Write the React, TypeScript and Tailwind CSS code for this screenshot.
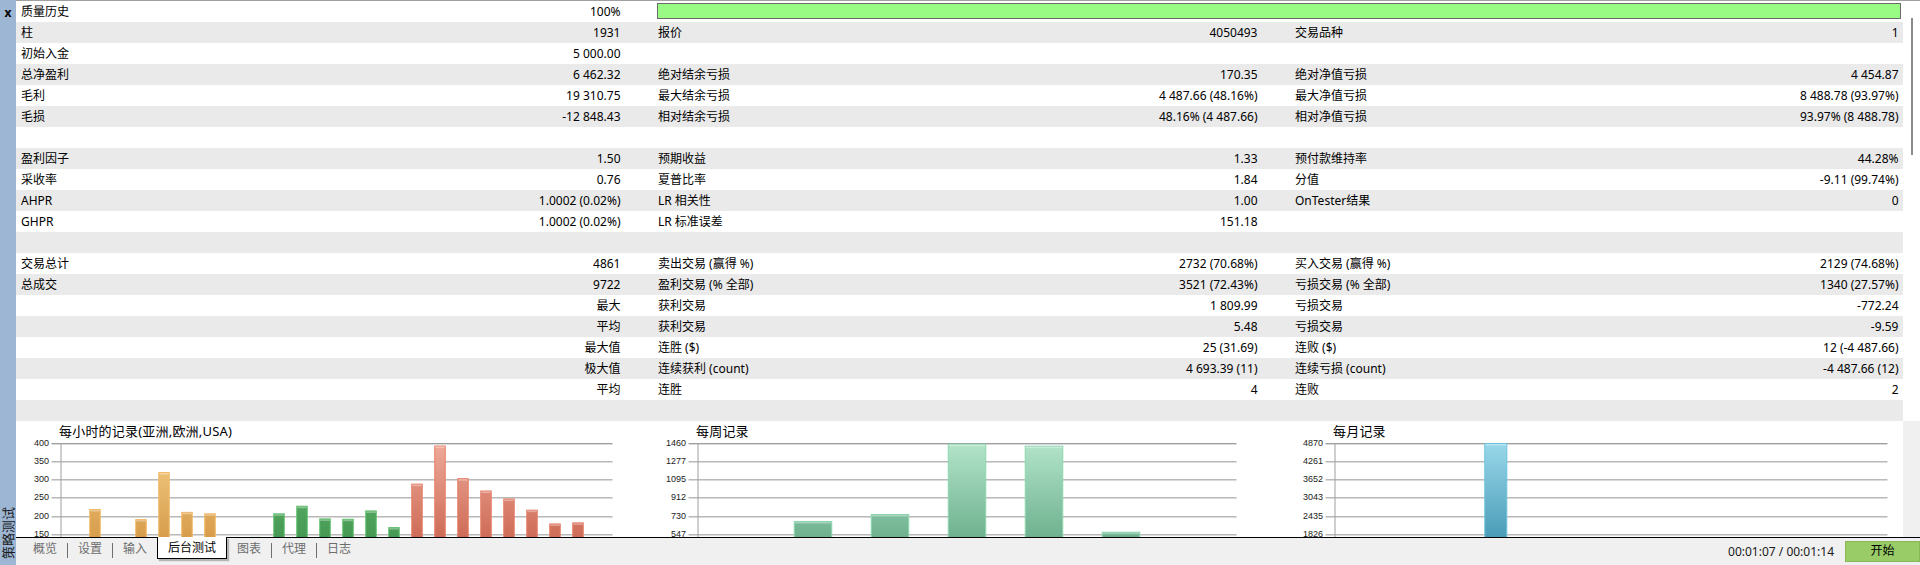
import React from 'react'

type Row = [string, string, string, string, string, string]

const ROWS: Row[] = [
  ['柱', '1931', '报价', '4050493', '交易品种', '1'],
  ['初始入金', '5 000.00', '', '', '', ''],
  ['总净盈利', '6 462.32', '绝对结余亏损', '170.35', '绝对净值亏损', '4 454.87'],
  ['毛利', '19 310.75', '最大结余亏损', '4 487.66 (48.16%)', '最大净值亏损', '8 488.78 (93.97%)'],
  ['毛损', '-12 848.43', '相对结余亏损', '48.16% (4 487.66)', '相对净值亏损', '93.97% (8 488.78)'],
  ['', '', '', '', '', ''],
  ['盈利因子', '1.50', '预期收益', '1.33', '预付款维持率', '44.28%'],
  ['采收率', '0.76', '夏普比率', '1.84', '分值', '-9.11 (99.74%)'],
  ['AHPR', '1.0002 (0.02%)', 'LR 相关性', '1.00', 'OnTester结果', '0'],
  ['GHPR', '1.0002 (0.02%)', 'LR 标准误差', '151.18', '', ''],
  ['', '', '', '', '', ''],
  ['交易总计', '4861', '卖出交易 (赢得 %)', '2732 (70.68%)', '买入交易 (赢得 %)', '2129 (74.68%)'],
  ['总成交', '9722', '盈利交易 (% 全部)', '3521 (72.43%)', '亏损交易 (% 全部)', '1340 (27.57%)'],
  ['', '最大', '获利交易', '1 809.99', '亏损交易', '-772.24'],
  ['', '平均', '获利交易', '5.48', '亏损交易', '-9.59'],
  ['', '最大值', '连胜 ($)', '25 (31.69)', '连败 ($)', '12 (-4 487.66)'],
  ['', '极大值', '连续获利 (count)', '4 693.39 (11)', '连续亏损 (count)', '-4 487.66 (12)'],
  ['', '平均', '连胜', '4', '连败', '2'],
  ['', '', '', '', '', ''],
]

// bar colours: [gradient top, gradient bottom, outline]
const COLORS: Record<string, [string, string, string]> = {
  asia: ['#f5d08a', '#c7812a', '#f3b866'],
  eu: ['#6cbf77', '#2f8440', '#62c06f'],
  us: ['#eeaa9a', '#bd4a33', '#e8806a'],
  week: ['#b3e4ca', '#4a9670', '#8ad7ae'],
  month: ['#9ad8ea', '#1f7c9c', '#6cc3dd'],
}

const HOURLY = [100, 218, 110, 190, 320, 210, 206, 95, 141, 206, 227, 192, 191, 214, 168, 288, 393, 303, 269, 247, 216, 178, 181, 120]

type ChartProps = {
  title: string
  plotW: number
  slots: number
  max: number
  ticks: string[]
  bars: { i: number; v: number; c: string }[]
  id: string
}

function Chart({ title, plotW, slots, max, ticks, bars, id }: ChartProps) {
  const H = 145
  const ax = 44.5
  const slot = plotW / slots
  const used = Array.from(new Set(bars.map((b) => b.c)))
  return (
    <div className="flex flex-col">
      <div className="h-[22px] pl-[43px] flex items-center text-[13px] tracking-[0.2px]">{title}</div>
      <svg width={ax + plotW + 6} height={166} className="block -mt-[6px]">
        <defs>
          {used.map((c) => (
            <linearGradient key={c} id={`${id}-${c}`} gradientUnits="userSpaceOnUse" x1="0" y1="0" x2="0" y2={H}>
              <stop offset="0" stopColor={COLORS[c][0]} />
              <stop offset="1" stopColor={COLORS[c][1]} />
            </linearGradient>
          ))}
        </defs>
        <g transform="translate(0,6)">
          {ticks.map((t, k) => {
            const y = Math.round((H / 8) * k)
            return (
              <g key={t}>
                <rect x={ax - 9} y={y} width={plotW + 9} height={1} fill={k === 0 ? '#9e9e9e' : '#b9b9b9'} />
                <rect x={ax - 9} y={y + 1} width={plotW + 9} height={1} fill="#dadada" />
                {/* labels further down sit below the tab bar and are never seen */}
                {k < 6 && (
                  <text
                    x={ax - 11.5}
                    y={y + 1}
                    textAnchor="end"
                    dominantBaseline="middle"
                    fontSize="9"
                    fontFamily="'Liberation Sans', sans-serif"
                    fill="#222"
                  >
                    {t}
                  </text>
                )}
              </g>
            )
          })}
          <rect x={ax} y={0} width={1} height={H + 10} fill="#a0a0a0" />
          {bars.map((b) => {
            const x = ax + b.i * slot + slot / 4
            const y = H * (1 - b.v / max)
            return (
              <g key={b.i}>
                <rect
                  x={x + 0.5}
                  y={y + 0.5}
                  width={slot / 2 - 1}
                  height={H + 20 - y}
                  fill={`url(#${id}-${b.c})`}
                  stroke={COLORS[b.c][2]}
                  strokeWidth={1}
                />
                <rect x={x + 1} y={y + 1} width={slot / 2 - 2} height={1.5} fill="#ffffff" opacity={0.35} />
              </g>
            )
          })}
        </g>
      </svg>
    </div>
  )
}

function Cell({ label, value, w, pr }: { label: string; value: string; w: string; pr: string }) {
  return (
    <div className={`${w} ${pr} pl-[5px] flex items-center justify-between whitespace-nowrap`}>
      <span>{label}</span>
      <span>{value}</span>
    </div>
  )
}

const TABS = ['概览', '设置', '输入', '后台测试', '图表', '代理', '日志']

export default function App() {
  return (
    <div className="w-[1920px] h-[565px] flex overflow-hidden bg-white text-[12px] text-black font-['Noto_Sans','Noto_Sans_CJK_SC',sans-serif]">
      {/* left dock strip */}
      <div className="w-[16px] bg-[#9db6d4] flex flex-col items-center justify-between">
        <div className="h-[25px] flex items-center justify-center text-[12px] font-bold leading-none">x</div>
        <div className="mb-[6px] [writing-mode:vertical-rl] [text-orientation:sideways] rotate-180 text-[13px] leading-[16px] text-[#1a1a1a]">
          策略测试
        </div>
      </div>

      <div className="flex-1 flex flex-col min-w-0">
        <div className="flex h-[537px]">
          <div className="w-[1887px] flex flex-col border-t border-[#a0a0a0]">
            {/* quality row */}
            <div className="h-[21px] leading-[21px] flex bg-white">
              <Cell label="质量历史" value="100%" w="w-[637px]" pr="pr-[32.5px]" />
              <div className="flex-1 pl-[4px] pr-[2.5px] pt-[2px]">
                <div className="h-[16px] bg-[#99fb84] border border-[#6a6a6a]" />
              </div>
            </div>
            {ROWS.map((r, i) => (
              <div key={i} className={`h-[21px] leading-[21px] flex ${i % 2 === 0 ? 'bg-[#eaeaea]' : 'bg-white'}`}>
                <Cell label={r[0]} value={r[1]} w="w-[637px]" pr="pr-[32.5px]" />
                <Cell label={r[2]} value={r[3]} w="w-[637px]" pr="pr-[32.5px]" />
                <Cell label={r[4]} value={r[5]} w="w-[613px]" pr="pr-[4.5px]" />
              </div>
            ))}

            {/* charts */}
            <div className="flex-1 overflow-hidden flex bg-white">
              <div className="w-[637px]">
                <Chart
                  id="h"
                  title="每小时的记录(亚洲,欧洲,USA)"
                  plotW={552}
                  slots={24}
                  max={400}
                  ticks={['400', '350', '300', '250', '200', '150', '100', '50', '0']}
                  bars={HOURLY.map((v, i) => ({ i, v, c: i < 8 ? 'asia' : i < 15 ? 'eu' : 'us' }))}
                />
              </div>
              <div className="w-[637px]">
                <Chart
                  id="w"
                  title="每周记录"
                  plotW={539}
                  slots={7}
                  max={1460}
                  ticks={['1460', '1277', '1095', '912', '730', '547', '365', '182', '0']}
                  bars={[
                    { i: 1, v: 675, c: 'week' },
                    { i: 2, v: 745, c: 'week' },
                    { i: 3, v: 1453, c: 'week' },
                    { i: 4, v: 1433, c: 'week' },
                    { i: 5, v: 567, c: 'week' },
                  ]}
                />
              </div>
              <div className="w-[613px]">
                <Chart
                  id="m"
                  title="每月记录"
                  plotW={553}
                  slots={12}
                  max={4870}
                  ticks={['4870', '4261', '3652', '3043', '2435', '1826', '1217', '608', '0']}
                  bars={[{ i: 3, v: 4870, c: 'month' }]}
                />
              </div>
            </div>
          </div>

          {/* scrollbar column */}
          <div className="w-[17px] flex flex-col border-t border-[#a0a0a0]">
            <div className="h-[420px] bg-white pt-[17px] pl-[8px]">
              <div className="w-[2px] h-[137px] bg-[#8c8c8c]" />
            </div>
            <div className="flex-1 bg-[#f0f0f0]" />
          </div>
        </div>

        {/* bottom tab bar */}
        <div className="h-[28px] border-t border-black bg-[#f0f0f0] flex items-start">
          <div className="flex items-start pl-[7px]">
            {TABS.map((t, i) => {
              const active = t === '后台测试'
              const prevActive = TABS[i - 1] === '后台测试'
              return (
                <React.Fragment key={t}>
                  {i > 0 && !active && !prevActive && <div className="w-px h-[15px] mt-[5px] bg-[#6e6e6e]" />}
                  {active ? (
                    <div className="-mt-px h-[22px] px-[10px] flex items-center bg-white border-x border-b border-black shadow-[2px_2px_1px_rgba(0,0,0,0.25)]">
                      {t}
                    </div>
                  ) : (
                    <div className="h-[21px] px-[10px] flex items-center text-[#6d6d6d]">{t}</div>
                  )}
                </React.Fragment>
              )
            })}
          </div>
          <div className="ml-auto flex items-start">
            <div className="h-[27px] flex items-center pr-[11px] text-[#1a1a1a]">00:01:07 / 00:01:14</div>
            <div className="mt-[2.5px] w-[75px] h-[21px] flex items-center justify-center bg-[#99cc66] border border-[#86b955]">
              开始
            </div>
          </div>
        </div>
      </div>
    </div>
  )
}
